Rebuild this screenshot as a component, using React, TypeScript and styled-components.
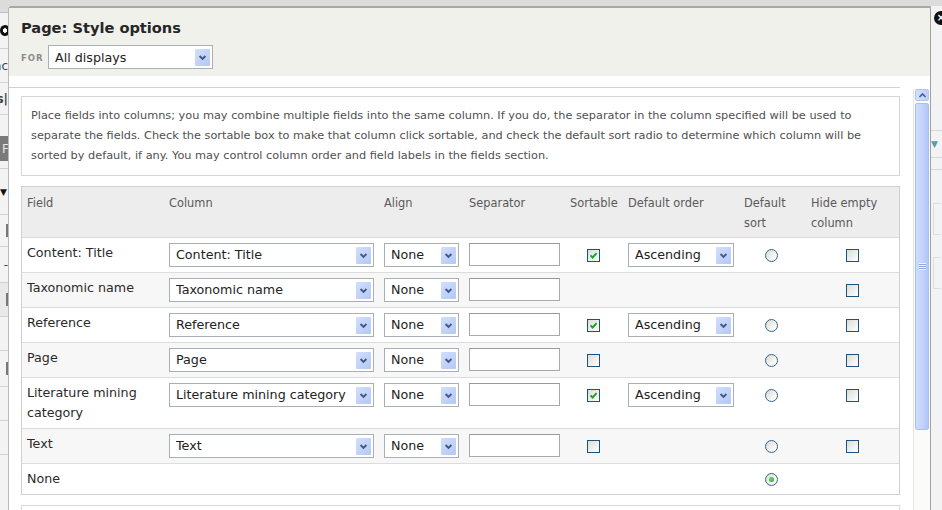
import React from "react";
import styled, { createGlobalStyle } from "styled-components";

const GlobalStyle = createGlobalStyle`
  *, *::before, *::after { box-sizing: border-box; }
  html, body { margin: 0; padding: 0; }
  body {
    width: 942px;
    height: 510px;
    overflow: hidden;
    background: #f1f1f1;
    font-family: "DejaVu Sans", Verdana, sans-serif;
  }
`;

const Page = styled.div`
  display: flex;
  width: 942px;
  height: 510px;
  overflow: hidden;
  background: linear-gradient(#dcdcdc 0 6px, #f3f3f3 6px);
`;

/* ---------- underlying page fragments (left / right of the dialog) ---------- */

const SideStrip = styled.div<{ $w: number }>`
  width: ${(p) => p.$w}px;
  flex: none;
  display: flex;
  flex-direction: column;
  overflow: hidden;
`;

const Seg = styled.div<{ $h: number; $bg?: string; $line?: string; $align?: string }>`
  height: ${(p) => p.$h}px;
  flex: none;
  display: flex;
  align-items: center;
  justify-content: ${(p) => p.$align || "flex-end"};
  background: ${(p) => p.$bg || "transparent"};
  border-bottom: 1px solid ${(p) => p.$line || "transparent"};
  overflow: hidden;
  white-space: nowrap;
  font-size: 12px;
  color: #444;
`;

const EyeBlob = styled.span`
  display: block;
  width: 16px;
  height: 11px;
  margin-right: -2px;
  border-radius: 50%;
  background: radial-gradient(circle at 50% 50%, #fff 0 2px, #111 2.5px);
`;

const DarkTab = styled.span`
  display: flex;
  align-items: center;
  width: 100%;
  height: 26px;
  padding-left: 2px;
  background: #7a7a7a;
  color: #e6e6e6;
  font-size: 12px;
`;

const Tri = styled.span<{ $c: string }>`
  font-size: 9px;
  color: ${(p) => p.$c};
`;

const VBar = styled.span`
  display: block;
  width: 2px;
  height: 13px;
  background: #777;
`;

const FaintBox = styled.span`
  display: block;
  width: 8px;
  height: 32px;
  margin-left: 2px;
  border: 1px solid #dedede;
  border-right: none;
`;

const CloseRow = styled.div`
  height: 26px;
  padding: 5px 0 0 3px;
  flex: none;
`;

const CloseBtn = styled.span`
  display: flex;
  align-items: center;
  justify-content: center;
  width: 14px;
  height: 14px;
  border-radius: 50%;
  background: #111;
  color: #fff;
  font-size: 10px;
  font-weight: bold;
  line-height: 1;
`;

/* ---------- dialog ---------- */

const Modal = styled.div`
  width: 923px;
  flex: none;
  margin-top: 6px;
  display: flex;
  flex-direction: column;
  background: #fff;
  border-top: 2px solid #a8a8a8;
  border-left: 1px solid #b9b9b9;
  border-right: 1px solid #a0a0a0;
  border-top-left-radius: 3px;
`;

const Header = styled.div`
  height: 68px;
  flex: none;
  background: #f1f1ec;
  padding: 11px 12px 7px;
`;

const Title = styled.h1`
  margin: 0;
  font-size: 14.6px;
  line-height: 18px;
  font-weight: bold;
  color: #262626;
`;

const ForRow = styled.div`
  display: flex;
  align-items: center;
  margin-top: 8px;
`;

const ForLabel = styled.span`
  font-size: 8.5px;
  font-weight: bold;
  letter-spacing: 1px;
  color: #8c8c8c;
  width: 27px;
  padding-top: 2px;
`;

const Body = styled.div`
  flex: 1;
  display: flex;
  min-height: 0;
`;

const Main = styled.div`
  flex: 1;
  padding-top: 11px;
`;

const Pane = styled.div`
  margin-right: 13px;
  border-top: 1px solid #d2d2d2;
  padding: 8px 0 0 12px;
`;

const Description = styled.p`
  margin: 0 0 10px;
  border: 1px solid #d6d6d6;
  padding: 9px;
  font-size: 11.3px;
  line-height: 20px;
  color: #505050;
`;

const NextBox = styled.div`
  margin-top: 10px;
  height: 40px;
  border: 1px solid #d6d6d6;
`;

/* ---------- scrollbar ---------- */

const ScrollTrack = styled.div`
  width: 17px;
  flex: none;
  margin-top: 13px;
  border-left: 1px solid #e4e4e4;
  background: #fbfbf9;
  padding-left: 1px;
  display: flex;
  flex-direction: column;
`;

const ScrollArrow = styled.div`
  width: 14px;
  height: 12px;
  border-radius: 2px;
  background: linear-gradient(90deg, #d4e0fd, #bccff8);
  border: 1px solid #b3c6f3;
  display: flex;
  align-items: center;
  justify-content: center;
`;

const ScrollThumb = styled.div`
  width: 14px;
  height: 327px;
  margin-top: 2px;
  border-radius: 2px;
  background: linear-gradient(90deg, #cfdcfd, #c0d1fb 60%, #b2c7f6);
  border: 1px solid #a9bff2;
  display: flex;
  align-items: center;
  justify-content: center;
`;

const Grip = styled.span`
  display: block;
  width: 7px;
  height: 7px;
  background: repeating-linear-gradient(#eef3ff 0 1px, #8fa7de 1px 2px);
`;

/* ---------- table ---------- */

const Table = styled.table`
  width: 879px;
  table-layout: fixed;
  border-collapse: separate;
  border-spacing: 0;
  border: 1px solid #d0d0d0;
`;

const Th = styled.th`
  background: #ededed;
  text-align: left;
  vertical-align: top;
  font-weight: normal;
  font-size: 11.4px;
  line-height: 20px;
  color: #5a5a5a;
  padding: 6px 6px 4px;
  border-bottom: 1px solid #dcdcdc;
  &:first-child { padding-left: 5px; }
`;

const Tr = styled.tr<{ $alt: boolean }>`
  background: ${(p) => (p.$alt ? "#f7f7f7" : "#ffffff")};
  &:last-child td { border-bottom: none; }
`;

const Td = styled.td`
  vertical-align: top;
  padding: 5px 6px;
  font-size: 12.7px;
  line-height: 20px;
  color: #2a2a2a;
  border-bottom: 1px solid #dcdcdc;
  &:first-child { padding-left: 5px; }
`;

const Center = styled.div<{ $h: number }>`
  height: ${(p) => p.$h}px;
  display: flex;
  align-items: center;
  justify-content: center;
`;

const SelectBox = styled.div<{ $w: number }>`
  width: ${(p) => p.$w}px;
  height: 24px;
  display: flex;
  align-items: center;
  padding-left: 6px;
  border: 1px solid #a9afb5;
  background: #fff;
  font-size: 12.7px;
  color: #222;
  white-space: nowrap;
`;

const SelectText = styled.span`
  flex: 1;
  overflow: hidden;
`;

const DropButton = styled.span`
  flex: none;
  width: 15px;
  height: 17px;
  margin-right: 2px;
  display: flex;
  align-items: center;
  justify-content: center;
  border-radius: 1px;
  background: linear-gradient(135deg, #d2dffd, #b3c8f6);
`;

const TextField = styled.input`
  display: block;
  width: 91px;
  height: 23px;
  margin: 0;
  padding: 0 3px;
  border: 1px solid #a9a9a9;
  border-top-color: #999;
  background: #fff;
  font: inherit;
  outline: none;
`;

const CheckBox = styled.span`
  width: 13px;
  height: 13px;
  display: flex;
  align-items: center;
  justify-content: center;
  border: 1px solid #1c5180;
  background: linear-gradient(135deg, #dcdcd6 0%, #f3f3f1 65%, #ffffff 100%);
`;

const Radio = styled.span`
  width: 13px;
  height: 13px;
  display: flex;
  align-items: center;
  justify-content: center;
  border-radius: 50%;
  border: 1px solid #36638f;
  background: linear-gradient(135deg, #d8d8d2 0%, #f4f4f2 60%, #ffffff 100%);
`;

const RadioDot = styled.span`
  width: 5px;
  height: 5px;
  border-radius: 50%;
  background: radial-gradient(circle at 40% 40%, #6be06b, #1f9a1f);
`;

const Chevron = () => (
  <svg width="9" height="9" viewBox="0 0 9 9">
    <path d="M1.6 3 L4.5 5.9 L7.4 3" fill="none" stroke="#43587f" strokeWidth="1.9" />
  </svg>
);

const ChevronUp = () => (
  <svg width="9" height="7" viewBox="0 0 9 7">
    <path d="M1.5 5 L4.5 2 L7.5 5" fill="none" stroke="#4a5f8a" strokeWidth="1.6" />
  </svg>
);

const Tick = () => (
  <svg width="9" height="9" viewBox="0 0 9 9">
    <path d="M1.5 4.3 L3.6 6.5 L7.6 2.2" fill="none" stroke="#21a121" strokeWidth="1.9" />
  </svg>
);

const Select = ({ w, value }: { w: number; value: string }) => (
  <SelectBox $w={w}>
    <SelectText>{value}</SelectText>
    <DropButton>
      <Chevron />
    </DropButton>
  </SelectBox>
);

type Check = "on" | "off" | null;

type Row = {
  label: string;
  control: boolean;
  sortable: Check;
  order: boolean;
  sort: Check;
  hide: boolean;
};

const rows: Row[] = [
  { label: "Content: Title", control: true, sortable: "on", order: true, sort: "off", hide: true },
  { label: "Taxonomic name", control: true, sortable: null, order: false, sort: null, hide: true },
  { label: "Reference", control: true, sortable: "on", order: true, sort: "off", hide: true },
  { label: "Page", control: true, sortable: "off", order: false, sort: "off", hide: true },
  { label: "Literature mining category", control: true, sortable: "on", order: true, sort: "off", hide: true },
  { label: "Text", control: true, sortable: "off", order: false, sort: "off", hide: true },
  { label: "None", control: false, sortable: null, order: false, sort: "on", hide: false },
];

const cols = [141, 215, 85, 101, 58, 116, 67, 94];

export default function App() {
  return (
    <>
      <GlobalStyle />
      <Page>
        <SideStrip $w={8}>
          <Seg $h={13} $bg="#dcdcdc" $line="#bdbdbd" />
          <Seg $h={36} $line="#d2d2d2">
            <EyeBlob />
          </Seg>
          <Seg $h={34} $line="#d2d2d2">nc</Seg>
          <Seg $h={32} $line="#d2d2d2">
            <b>s|</b>
          </Seg>
          <Seg $h={21} />
          <Seg $h={26} $align="flex-start">
            <DarkTab>F</DarkTab>
          </Seg>
          <Seg $h={7} $line="#d2d2d2" />
          <Seg $h={46} $line="#d2d2d2" $align="flex-start">
            <Tri $c="#111">▼</Tri>
          </Seg>
          <Seg $h={32} $line="#d2d2d2">
            <VBar />
          </Seg>
          <Seg $h={36} $line="#d2d2d2">-</Seg>
          <Seg $h={34} $bg="#e9e9e9" $line="#d2d2d2">
            <VBar />
          </Seg>
          <Seg $h={34} $line="#d2d2d2" />
          <Seg $h={36} $line="#d2d2d2">
            <VBar />
          </Seg>
          <Seg $h={34} $line="#d2d2d2" />
          <Seg $h={34} $line="#d2d2d2" />
        </SideStrip>

        <Modal>
          <Header>
            <Title>Page: Style options</Title>
            <ForRow>
              <ForLabel>FOR</ForLabel>
              <Select w={165} value="All displays" />
            </ForRow>
          </Header>
          <Body>
            <Main>
              <Pane>
                <Description>
                  Place fields into columns; you may combine multiple fields into the same column. If you do, the
                  separator in the column specified will be used to separate the fields. Check the sortable box to
                  make that column click sortable, and check the default sort radio to determine which column will
                  be sorted by default, if any. You may control column order and field labels in the fields section.
                </Description>
                <Table>
                  <colgroup>
                    {cols.map((w, i) => (
                      <col key={i} style={{ width: w }} />
                    ))}
                  </colgroup>
                  <thead>
                    <tr>
                      <Th>Field</Th>
                      <Th>Column</Th>
                      <Th>Align</Th>
                      <Th>Separator</Th>
                      <Th>Sortable</Th>
                      <Th>Default order</Th>
                      <Th>Default sort</Th>
                      <Th>Hide empty column</Th>
                    </tr>
                  </thead>
                  <tbody>
                    {rows.map((r, i) => {
                      const h = r.control ? 24 : 20;
                      return (
                        <Tr key={r.label} $alt={i % 2 === 1}>
                          <Td>{r.label}</Td>
                          <Td>{r.control && <Select w={205} value={r.label} />}</Td>
                          <Td>{r.control && <Select w={75} value="None" />}</Td>
                          <Td>{r.control && <TextField type="text" readOnly value="" />}</Td>
                          <Td>
                            {r.sortable && (
                              <Center $h={h}>
                                <CheckBox>{r.sortable === "on" && <Tick />}</CheckBox>
                              </Center>
                            )}
                          </Td>
                          <Td>{r.order && <Select w={106} value="Ascending" />}</Td>
                          <Td>
                            {r.sort && (
                              <Center $h={h}>
                                <Radio>{r.sort === "on" && <RadioDot />}</Radio>
                              </Center>
                            )}
                          </Td>
                          <Td>
                            {r.hide && (
                              <Center $h={h}>
                                <CheckBox />
                              </Center>
                            )}
                          </Td>
                        </Tr>
                      );
                    })}
                  </tbody>
                </Table>
                <NextBox />
              </Pane>
            </Main>
            <ScrollTrack>
              <ScrollArrow>
                <ChevronUp />
              </ScrollArrow>
              <ScrollThumb>
                <Grip />
              </ScrollThumb>
            </ScrollTrack>
          </Body>
        </Modal>

        <SideStrip $w={11}>
          <Seg $h={6} $bg="#dcdcdc" />
          <CloseRow>
            <CloseBtn>×</CloseBtn>
          </CloseRow>
          <Seg $h={99} $line="#d6d6d6" />
          <Seg $h={27} $line="#d6d6d6" $align="flex-start">
            <Tri $c="#5a9aa8">▼</Tri>
          </Seg>
          <Seg $h={12} $line="#d6d6d6" />
          <Seg $h={32} />
          <Seg $h={34} $align="flex-start">
            <FaintBox />
          </Seg>
          <Seg $h={20} />
          <Seg $h={34} $align="flex-start">
            <FaintBox />
          </Seg>
        </SideStrip>
      </Page>
    </>
  );
}
